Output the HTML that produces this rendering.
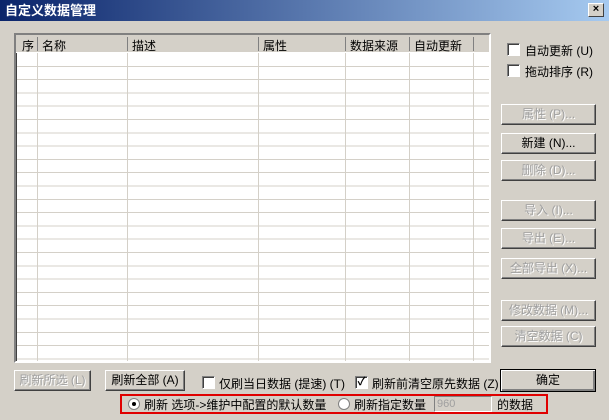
<!DOCTYPE html><html><head><meta charset="utf-8"><style>
*{margin:0;padding:0;box-sizing:border-box}
body{width:609px;height:420px;background:#d4d0c8;font:12px "Liberation Sans","Noto Sans CJK SC","WenQuanYi Zen Hei",sans-serif;position:relative;overflow:hidden;color:#000}
.abs{position:absolute}
.title{left:0;top:0;width:609px;height:21px;background:linear-gradient(90deg,#0a246a,#a6caf0);color:#fff;font-weight:bold;font-size:13px;line-height:21px;padding-left:5px}
.close{right:5px;top:3px;width:16px;height:14px;background:#d4d0c8;border:1px solid;border-color:#fff #404040 #404040 #fff;font-size:11px;line-height:11px;text-align:center;color:#000;font-weight:bold}
.table{left:14px;top:33px;width:477px;height:330px;border:2px solid;border-color:#808080 #fff #fff #808080;box-shadow:inset 1px 1px #404040;background:#fff repeating-linear-gradient(180deg,#fff 0,#fff 12.3px,#d4d0c8 12.3px,#d4d0c8 13.3px);background-position:0 18.5px;overflow:hidden}
.hdr{position:absolute;left:0;top:0;width:100%;height:18px;background:#d4d0c8;border-bottom:1px solid #fff}
.col{position:absolute;top:0;height:400px;border-left:1px solid #d4d0c8}
.h{position:absolute;top:2px;font-size:12px}
.hs{position:absolute;top:2px;width:1px;height:14px;background:#808080}
.btn{position:absolute;height:21px;border:1px solid;border-color:#fff #404040 #404040 #fff;box-shadow:inset -1px -1px #808080;text-align:center;line-height:19px;font-size:12px;white-space:nowrap}
.dis{color:#a0a0a0;text-shadow:1px 1px #fff}
.cb{position:absolute;width:13px;height:13px;background:#fff;border:1px solid;border-color:#808080 #fff #fff #808080;box-shadow:inset 1px 1px #404040}
.lbl{position:absolute;font-size:12px;white-space:nowrap}
</style></head><body>
<div class="abs title">自定义数据管理</div>
<div class="abs close">×</div>
<div class="abs table">
 <div class="col" style="left:21px"></div><div class="col" style="left:111px"></div><div class="col" style="left:242px"></div><div class="col" style="left:329px"></div><div class="col" style="left:393px"></div><div class="col" style="left:457px"></div>
 <div class="hdr">
  <span class="h" style="left:6px">序</span><div class="hs" style="left:21px"></div>
  <span class="h" style="left:26px">名称</span><div class="hs" style="left:111px"></div>
  <span class="h" style="left:116px">描述</span><div class="hs" style="left:242px"></div>
  <span class="h" style="left:247px">属性</span><div class="hs" style="left:329px"></div>
  <span class="h" style="left:334px">数据来源</span><div class="hs" style="left:393px"></div>
  <span class="h" style="left:398px">自动更新</span><div class="hs" style="left:457px"></div>
 </div>
</div>
<div class="cb" style="left:507px;top:43px"></div><span class="lbl" style="left:525px;top:42px">自动更新 (U)</span>
<div class="cb" style="left:507px;top:64px"></div><span class="lbl" style="left:525px;top:63px">拖动排序 (R)</span>
<div class="btn dis" style="left:501px;top:104px;width:95px">属性 (P)...</div>
<div class="btn" style="left:501px;top:133px;width:95px">新建 (N)...</div>
<div class="btn dis" style="left:501px;top:160px;width:95px">删除 (D)...</div>
<div class="btn dis" style="left:501px;top:200px;width:95px">导入 (I)...</div>
<div class="btn dis" style="left:501px;top:228px;width:95px">导出 (E)...</div>
<div class="btn dis" style="left:501px;top:258px;width:95px">全部导出 (X)...</div>
<div class="btn dis" style="left:501px;top:300px;width:95px">修改数据 (M)...</div>
<div class="btn dis" style="left:501px;top:326px;width:95px">清空数据 (C)</div>
<div class="btn dis" style="left:14px;top:370px;width:77px">刷新所选 (L)</div>
<div class="btn" style="left:105px;top:370px;width:80px">刷新全部 (A)</div>
<div class="cb" style="left:202px;top:376px"></div><span class="lbl" style="left:219px;top:375px">仅刷当日数据 (提速) (T)</span>
<div class="cb" style="left:355px;top:376px;font-size:11px;line-height:10px;text-align:center;font-weight:bold">✓</div><span class="lbl" style="left:372px;top:375px">刷新前清空原先数据 (Z)</span>
<div class="btn" style="left:500px;top:369px;width:96px;height:23px;border:1px solid #000;box-shadow:inset 1px 1px #fff,inset -2px -2px #808080;line-height:20px">确定</div>
<div class="abs" style="left:120px;top:394px;width:428px;height:20px;border:2px solid #e00000"></div>
<div class="abs" style="left:128px;top:398px;width:12px;height:12px;border-radius:50%;background:#fff;border:1px solid #808080"><div style="position:absolute;left:3px;top:3px;width:4px;height:4px;border-radius:50%;background:#000"></div></div>
<span class="lbl" style="left:144px;top:396px">刷新 选项->维护中配置的默认数量</span>
<div class="abs" style="left:338px;top:398px;width:12px;height:12px;border-radius:50%;background:#fff;border:1px solid #808080"></div>
<span class="lbl" style="left:354px;top:396px">刷新指定数量</span>
<div class="abs" style="left:434px;top:396px;width:58px;height:16px;background:#d4d0c8;border:1px solid;border-color:#808080 #fff #fff #808080;color:#a0a0a0;font-size:11px;line-height:14px;padding-left:2px">960</div>
<span class="lbl" style="left:497px;top:396px">的数据</span>
</body></html>
